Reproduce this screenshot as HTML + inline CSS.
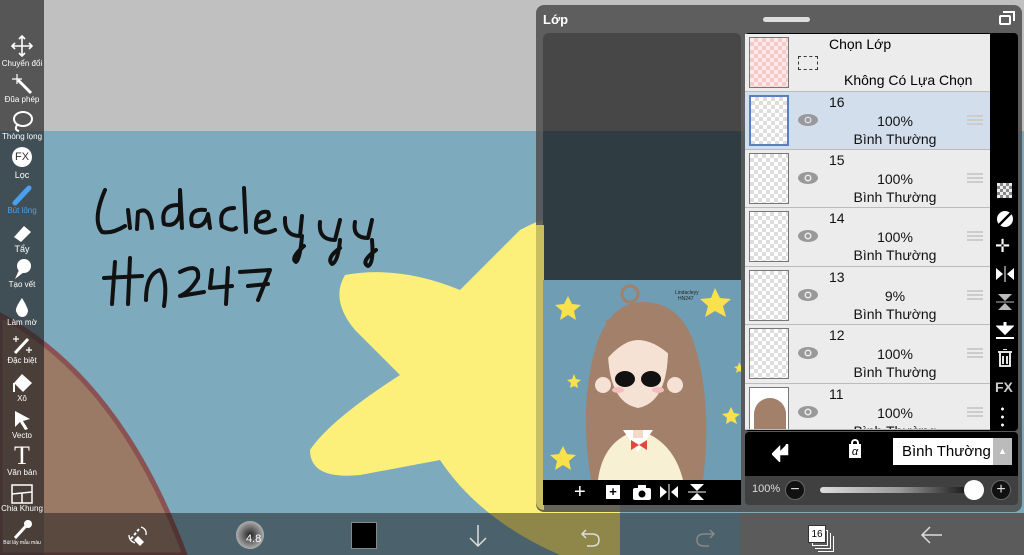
<!DOCTYPE html>
<html><head><meta charset="utf-8"><style>
*{margin:0;padding:0;box-sizing:border-box}
body{width:1024px;height:555px;overflow:hidden;position:relative;background:#7eaabe;font-family:"Liberation Sans","Noto Sans CJK JP",sans-serif}
.abs{position:absolute}
.tb{position:absolute;left:0;width:44px;text-align:center;color:#fff;font-size:8px}
.tb svg{display:block;margin:0 auto}
.row{position:absolute;left:745px;width:245px;background:#ececec;border-bottom:1px solid #bbb}
.th{position:absolute;left:4px;top:3px;width:40px;height:51px;border:1px solid #777;background-color:#fff;background-image:linear-gradient(45deg,#ddd 25%,transparent 25%,transparent 75%,#ddd 75%),linear-gradient(45deg,#ddd 25%,transparent 25%,transparent 75%,#ddd 75%);background-size:8px 8px;background-position:0 0,4px 4px}
.num{position:absolute;left:84px;top:2px;font-size:14px;color:#111}
.pct{position:absolute;left:60px;width:180px;text-align:center;top:21px;font-size:14px;color:#111}
.mode{position:absolute;left:60px;width:180px;text-align:center;top:39px;font-size:14px;color:#111}
.eye{position:absolute;left:52px;top:20px}
.hb{position:absolute;left:222px;top:23px;width:16px;height:10px;border-top:2px solid #ccc;border-bottom:2px solid #ccc}
.hb:after{content:"";position:absolute;left:0;right:0;top:2px;border-top:2px solid #ccc}
</style></head><body>
<!-- canvas -->
<div class="abs" style="left:0;top:0;width:1024px;height:131px;background:#c0c0c0"></div>
<svg class="abs" style="left:0;top:0" width="1024" height="555">
<path d="M0 315 Q120 380 185 555 L0 555Z" fill="#9a7a64" stroke="#8a5252" stroke-width="5"/>
<path d="M345 275 Q330 300 355 330 L400 375 Q330 420 310 450 Q310 480 360 475 L440 460 Q480 520 560 555 L620 555 L620 225 Q575 200 520 230 L460 290 Q400 265 345 275Z" fill="#fdf07a"/>
<g fill="none" stroke="#111" stroke-width="4" stroke-linecap="round" stroke-linejoin="round">
<path d="M105 190 Q92 220 102 232 Q112 234 125 226"/>
<path d="M128 210 L130 228 M137 229 L138 212 Q150 205 152 228"/>
<path d="M178 205 Q160 205 164 224 Q176 228 180 214 L180 190 L182 228"/>
<path d="M205 210 Q188 208 192 225 Q204 230 208 214 L210 228"/>
<path d="M234 208 Q218 208 222 226 Q232 232 236 228"/>
<path d="M244 188 L246 232"/>
<path d="M258 222 Q272 220 268 212 Q255 210 256 228 Q262 236 275 230"/>
<path d="M285 218 Q284 236 300 236 L302 216 M302 236 Q300 260 296 262 Q290 258 304 246"/>
<path d="M320 222 Q318 240 335 240 L340 220 M340 240 Q338 262 332 264 Q326 258 340 248"/>
<path d="M355 222 Q352 238 368 238 L372 220 M372 240 Q374 264 368 266 Q360 262 376 250"/>
<path d="M115 262 L112 304 M130 258 L128 304 M104 278 L142 276"/>
<path d="M146 300 Q146 274 160 270 Q168 280 164 306"/>
<path d="M180 272 Q200 262 198 278 Q190 292 180 296 L204 292"/>
<path d="M212 270 L210 288 L232 286 M228 268 L226 304"/>
<path d="M240 272 L270 270 L258 300 M248 286 L268 284"/>
</g>
</svg>
<!-- left toolbar -->
<div class="abs" style="left:0;top:0;width:44px;height:555px;background:rgba(35,35,35,0.68)"></div>
<div class="tb" style="top:35px"><svg width="22" height="22" viewBox="0 0 22 22" fill="none" stroke="#fff" stroke-width="1.6"><path d="M11 1V21M1 11H21M8 4l3-3 3 3M8 18l3 3 3-3M4 8l-3 3 3 3M18 8l3 3-3 3"/></svg><div style="margin-top:2px">Chuyển đổi</div></div>
<div class="tb" style="top:73px"><svg width="22" height="22"><path d="M7 7L20 20" stroke="#fff" stroke-width="3"/><path d="M6 1v10M1 6h10" stroke="#fff" stroke-width="1.2"/></svg><div>Đũa phép</div></div>
<div class="tb" style="top:110px"><svg width="22" height="22"><ellipse cx="12" cy="9" rx="9" ry="7" fill="none" stroke="#fff" stroke-width="2"/><path d="M6 15 Q3 20 8 21" stroke="#fff" stroke-width="2" fill="none"/></svg><div>Thòng lọng</div></div>
<div class="tb" style="top:147px"><div style="width:20px;height:20px;border-radius:50%;background:#fff;color:#333;font-size:11px;line-height:20px;margin:0 auto">FX</div><div style="font-size:9px;margin-top:3px">Lọc</div></div>
<div class="tb" style="top:184px;color:#4aa0ee"><svg width="22" height="22"><path d="M4 19L18 4" stroke="#4aa0ee" stroke-width="5" stroke-linecap="round"/></svg><div>Bút lông</div></div>
<div class="tb" style="top:222px"><svg width="22" height="22"><path d="M3 15L13 4L20 10L10 20Z" fill="#fff"/></svg><div style="font-size:9px">Tẩy</div></div>
<div class="tb" style="top:258px"><svg width="22" height="22"><circle cx="13" cy="8" r="7" fill="#fff"/><path d="M8 12L4 21L13 14Z" fill="#fff"/></svg><div>Tạo vết</div></div>
<div class="tb" style="top:296px"><svg width="22" height="22"><path d="M11 2Q4 12 5 15Q7 21 11 21Q16 21 17 15Q17 12 11 2Z" fill="#fff"/></svg><div>Làm mờ</div></div>
<div class="tb" style="top:334px"><svg width="22" height="22"><path d="M4 19L17 5" stroke="#fff" stroke-width="3"/><path d="M5 2v6M2 5h6M18 13v6M15 16h6" stroke="#fff" stroke-width="1.2"/></svg><div>Đặc biệt</div></div>
<div class="tb" style="top:372px"><svg width="22" height="22"><path d="M11 2L21 11L12 20L3 11Z" fill="#fff"/><path d="M3 11V20" stroke="#fff" stroke-width="2"/></svg><div>Xô</div></div>
<div class="tb" style="top:409px"><svg width="22" height="22"><path d="M4 2L19 10L12 12L17 20L14 21L9 13L4 18Z" fill="#fff"/></svg><div>Vecto</div></div>
<div class="tb" style="top:444px"><div style="font-family:'Liberation Serif',serif;font-size:26px;line-height:24px">T</div><div>Văn bản</div></div>
<div class="tb" style="top:484px"><svg width="22" height="20"><rect x="1" y="1" width="20" height="18" fill="none" stroke="#fff" stroke-width="1.5"/><path d="M1 10L21 8M11 9V19" stroke="#fff" stroke-width="1.5"/></svg><div>Chia Khung</div></div>
<div class="tb" style="top:518px"><svg width="22" height="22"><path d="M4 20L15 8" stroke="#fff" stroke-width="3"/><circle cx="17" cy="6" r="4" fill="#fff"/></svg><div style="font-size:5px">Bút lấy mẫu màu</div></div>
<!-- bottom bar -->
<div class="abs" style="left:44px;top:513px;width:696px;height:42px;background:rgba(20,20,20,0.48)"></div>
<div class="abs" style="left:740px;top:513px;width:284px;height:42px;background:#5b5b5b"></div>
<svg class="abs" style="left:125px;top:523px" width="26" height="24"><path d="M6 16L14 6" stroke="#fff" stroke-width="2" stroke-dasharray="3 2"/><path d="M13 13l6 6-4 4-6-6z" fill="#fff"/><path d="M16 4q6 2 5 8M4 12q0 6 6 8" stroke="#fff" stroke-width="1.3" fill="none"/></svg>
<div class="abs" style="left:236px;top:521px;width:28px;height:28px;border-radius:50%;background:radial-gradient(#222,#999 60%,#eee)"></div>
<div class="abs" style="left:246px;top:533px;color:#fff;font-size:11px">4.8</div>
<div class="abs" style="left:351px;top:522px;width:26px;height:27px;background:#000;border:1px solid #888"></div>
<svg class="abs" style="left:468px;top:524px" width="20" height="24"><path d="M10 1V22M2 14l8 8 8-8" stroke="#ddd" stroke-width="1.5" fill="none"/></svg>
<svg class="abs" style="left:580px;top:527px" width="22" height="20"><path d="M6 3L2 7l4 4M2 7h10q7 0 7 6t-7 6H7" stroke="#ddd" stroke-width="1.5" fill="none"/></svg>
<svg class="abs" style="left:694px;top:527px" width="22" height="20"><path d="M16 3l4 4-4 4M20 7H10q-7 0-7 6t7 6h5" stroke="#888" stroke-width="1.5" fill="none"/></svg>
<div class="abs" style="left:812px;top:530px;width:16px;height:16px;border:1px solid #fff;box-shadow:2px 2px 0 #5b5b5b,3px 3px 0 #fff,5px 5px 0 #5b5b5b,6px 6px 0 #fff"></div>
<div class="abs" style="left:808px;top:525px;width:18px;height:18px;background:#fff;color:#000;font-size:10px;text-align:center;line-height:18px;border:1px solid #333">16</div>
<svg class="abs" style="left:920px;top:525px" width="24" height="20"><path d="M22 10H2M10 2L2 10l8 8" stroke="#ddd" stroke-width="1.5" fill="none"/></svg>
<!-- layer panel -->
<div class="abs" style="left:536px;top:5px;width:486px;height:507px;background:rgba(80,80,80,0.88);border-radius:8px"></div>
<div class="abs" style="left:543px;top:12px;color:#fff;font-size:13px;font-weight:bold">Lớp</div>
<div class="abs" style="left:763px;top:17px;width:47px;height:5px;border-radius:3px;background:#ddd"></div>
<div class="abs" style="left:999px;top:15px;width:12px;height:10px;border:2px solid #fff;border-radius:2px"></div>
<div class="abs" style="left:1003px;top:11px;width:12px;height:10px;border-top:2px solid #fff;border-right:2px solid #fff"></div>
<!-- preview -->
<div class="abs" style="left:543px;top:33px;width:198px;height:98px;background:#474747;border-radius:6px 6px 0 0"></div>
<div class="abs" style="left:543px;top:131px;width:198px;height:149px;background:#2f3c42"></div>
<div class="abs" style="left:536px;top:225px;width:8px;height:285px;background:#c9bf5e;border-radius:0 0 0 8px"></div>
<svg class="abs" style="left:543px;top:280px" width="198" height="200">
<rect width="198" height="200" fill="#6f9db3"/>
<g fill="#f8e14a"><path d="M25 16l4 8 9 1-7 6 2 9-8-5-8 5 2-9-7-6 9-1z"/><path d="M172 8l5 10 11 1-8 7 3 11-11-6-10 6 3-11-8-7 11-1z"/><path d="M20 166l4 8 9 1-7 6 2 9-8-5-8 5 2-9-7-6 9-1z"/><path d="M188 127l3 6 6 1-5 4 2 6-6-3-5 3 1-6-5-4 6-1z"/><path d="M31 94l2 5 5 1-4 3 1 5-4-2-4 2 1-5-4-3 5-1z"/><path d="M196 82l2 4 4 1-3 2 1 4-4-2-3 2 1-4-3-2 4-1z"/></g>
<path d="M48 200 Q35 120 55 60 Q70 22 100 22 Q135 22 150 60 Q170 120 160 200Z" fill="#a2806a"/>
<circle cx="87" cy="14" r="8" fill="none" stroke="#a2806a" stroke-width="3"/>
<path d="M55 200 Q60 160 95 150 Q130 160 140 200Z" fill="#f8f0d2"/>
<path d="M80 150 L95 172 L110 150Z" fill="#fff"/>
<path d="M90 150 h10 v8 h-10z" fill="#f4d9c6"/>
<path d="M65 60 Q63 122 95 128 Q127 122 125 60Z" fill="#f6e2d4"/>
<circle cx="60" cy="105" r="8" fill="#f6e2d4"/><circle cx="132" cy="105" r="8" fill="#f6e2d4"/>
<path d="M63 40 Q95 30 127 42 L127 75 Q110 60 95 60 Q80 60 63 80Z" fill="#a2806a"/>
<ellipse cx="82" cy="99" rx="10" ry="8" fill="#111"/><ellipse cx="108" cy="99" rx="10" ry="8" fill="#111"/>
<ellipse cx="75" cy="110" rx="6" ry="3" fill="#f4bdbd"/><ellipse cx="115" cy="110" rx="6" ry="3" fill="#f4bdbd"/>
<path d="M96 165l-8-5v10zM96 165l8-5v10z" fill="#e3463c"/>
<text x="132" y="14" font-size="5" fill="#222">Lindacleyy</text><text x="135" y="20" font-size="5" fill="#222">HN247</text>
</svg>
<div class="abs" style="left:543px;top:480px;width:198px;height:25px;background:#000"></div>
<div class="abs" style="left:574px;top:480px;color:#fff;font-size:20px;line-height:24px">+</div>
<div class="abs" style="left:606px;top:485px;width:14px;height:14px;background:#fff;color:#000;font-size:13px;line-height:13px;text-align:center;font-weight:bold">+</div>
<svg class="abs" style="left:633px;top:485px" width="18" height="15"><rect y="3" width="18" height="12" rx="2" fill="#fff"/><rect x="5" y="0" width="8" height="4" fill="#fff"/><circle cx="9" cy="9" r="3.5" fill="#000"/></svg>
<svg class="abs" style="left:660px;top:484px" width="18" height="16"><path d="M0 2l7 6-7 6zM18 2l-7 6 7 6z" fill="#fff"/><path d="M9 0v16" stroke="#fff"/></svg>
<svg class="abs" style="left:688px;top:484px" width="18" height="16"><path d="M2 0l7 7 7-7zM2 16l7-7 7 7z" fill="#fff"/><path d="M0 8h18" stroke="#fff"/></svg>
<!-- layer list -->
<div class="abs" style="left:745px;top:33px;width:273px;height:398px;background:#000;border-radius:4px"></div>
<div class="row" style="top:34px;height:58px">
<div class="th" style="background-color:#fbe8e8;background-image:linear-gradient(45deg,#f3c9c9 25%,transparent 25%,transparent 75%,#f3c9c9 75%),linear-gradient(45deg,#f3c9c9 25%,transparent 25%,transparent 75%,#f3c9c9 75%)"></div>
<div class="abs" style="left:84px;top:2px;font-size:14px">Chọn Lớp</div>
<div class="abs" style="left:53px;top:22px;width:20px;height:14px;border:1px dashed #333"></div>
<div class="abs" style="left:99px;top:38px;font-size:14px">Không Có Lựa Chọn</div>
</div>
<div class="row" style="top:92px;height:58px;background:#d3deec"><div class="th" style="border:2px solid #5a7fbf"></div><div class="num">16</div><svg class="eye" width="22" height="16"><ellipse cx="11" cy="8" rx="10" ry="6" fill="#999"/><circle cx="11" cy="8" r="3.5" fill="#d3deec"/><circle cx="11" cy="8" r="2" fill="#999"/></svg><div class="pct">100%</div><div class="mode">Bình Thường</div><div class="hb"></div></div>
<div class="row" style="top:150px;height:58px"><div class="th"></div><div class="num">15</div><svg class="eye" width="22" height="16"><ellipse cx="11" cy="8" rx="10" ry="6" fill="#999"/><circle cx="11" cy="8" r="3.5" fill="#ececec"/><circle cx="11" cy="8" r="2" fill="#999"/></svg><div class="pct">100%</div><div class="mode">Bình Thường</div><div class="hb"></div></div>
<div class="row" style="top:208px;height:59px"><div class="th"></div><div class="num">14</div><svg class="eye" width="22" height="16"><ellipse cx="11" cy="8" rx="10" ry="6" fill="#999"/><circle cx="11" cy="8" r="3.5" fill="#ececec"/><circle cx="11" cy="8" r="2" fill="#999"/></svg><div class="pct">100%</div><div class="mode">Bình Thường</div><div class="hb"></div></div>
<div class="row" style="top:267px;height:58px"><div class="th"></div><div class="num">13</div><svg class="eye" width="22" height="16"><ellipse cx="11" cy="8" rx="10" ry="6" fill="#999"/><circle cx="11" cy="8" r="3.5" fill="#ececec"/><circle cx="11" cy="8" r="2" fill="#999"/></svg><div class="pct">9%</div><div class="mode">Bình Thường</div><div class="hb"></div></div>
<div class="row" style="top:325px;height:59px"><div class="th"></div><div class="num">12</div><svg class="eye" width="22" height="16"><ellipse cx="11" cy="8" rx="10" ry="6" fill="#999"/><circle cx="11" cy="8" r="3.5" fill="#ececec"/><circle cx="11" cy="8" r="2" fill="#999"/></svg><div class="pct">100%</div><div class="mode">Bình Thường</div><div class="hb"></div></div>
<div class="row" style="top:384px;height:46px;overflow:hidden"><div class="th" style="background:#fff"><div style="position:absolute;left:4px;top:10px;width:32px;height:42px;border-radius:16px 16px 0 0;background:#a2806a"></div></div><div class="num">11</div><svg class="eye" width="22" height="16"><ellipse cx="11" cy="8" rx="10" ry="6" fill="#999"/><circle cx="11" cy="8" r="3.5" fill="#ececec"/><circle cx="11" cy="8" r="2" fill="#999"/></svg><div class="pct">100%</div><div class="mode">Bình Thường</div><div class="hb"></div></div>
<!-- right icons -->
<div class="abs" style="left:997px;top:183px;width:15px;height:15px;background-color:#eee;background-image:linear-gradient(45deg,#888 25%,transparent 25%,transparent 75%,#888 75%),linear-gradient(45deg,#888 25%,transparent 25%,transparent 75%,#888 75%);background-size:6px 6px;background-position:0 0,3px 3px"></div>
<div class="abs" style="left:997px;top:211px;width:16px;height:16px;border-radius:50%;background:linear-gradient(135deg,#fff 45%,#000 45%,#000 55%,#fff 55%)"></div>
<div class="abs" style="left:995px;top:236px;color:#fff;font-size:18px">✛</div>
<svg class="abs" style="left:996px;top:266px" width="18" height="16"><path d="M0 2l7 6-7 6zM18 2l-7 6 7 6z" fill="#fff"/><path d="M9 0v16" stroke="#fff"/></svg>
<svg class="abs" style="left:996px;top:294px" width="18" height="16"><path d="M2 0l7 7 7-7zM2 16l7-7 7 7z" fill="#bbb"/><path d="M0 8h18" stroke="#bbb"/></svg>
<svg class="abs" style="left:996px;top:322px" width="18" height="18"><path d="M9 0v8M3 5l6 6 6-6z" stroke="#fff" stroke-width="3" fill="#fff"/><path d="M0 16h18" stroke="#fff" stroke-width="2"/></svg>
<svg class="abs" style="left:998px;top:349px" width="14" height="18"><path d="M0 3h14M5 0h4M2 4v13h10V4M5 7v8M9 7v8" stroke="#fff" stroke-width="1.8" fill="none"/></svg>
<div class="abs" style="left:995px;top:379px;color:#ccc;font-size:14px;font-weight:bold">FX</div>
<div class="abs" style="left:1001px;top:405px;width:3px;height:22px;background:radial-gradient(circle,#fff 1.3px,transparent 1.6px);background-size:3px 8px"></div>
<!-- bottom controls -->
<div class="abs" style="left:745px;top:432px;width:273px;height:44px;background:#000;border-radius:4px 4px 0 0"></div>
<svg class="abs" style="left:772px;top:442px" width="20" height="20"><path d="M15 2v10H5M1 12l6-6v12z" stroke="#fff" stroke-width="2.5" fill="#fff"/></svg>
<div class="abs" style="left:849px;top:444px;width:12px;height:14px;background:#fff;color:#000;font-size:11px;text-align:center;line-height:16px;font-style:italic">α</div>
<div class="abs" style="left:851px;top:439px;width:8px;height:7px;border:2px solid #fff;border-bottom:none;border-radius:4px 4px 0 0"></div>
<div class="abs" style="left:893px;top:438px;width:100px;height:27px;background:#fff;font-size:15px;line-height:27px;padding-left:9px">Bình Thường</div>
<div class="abs" style="left:993px;top:438px;width:19px;height:27px;background:#bbb;color:#fff;font-size:9px;text-align:center;line-height:27px">▲</div>
<div class="abs" style="left:745px;top:476px;width:273px;height:29px;background:#404040;border-radius:0 0 4px 4px"></div>
<div class="abs" style="left:752px;top:483px;color:#ddd;font-size:11px">100%</div>
<div class="abs" style="left:785px;top:480px;width:20px;height:20px;border-radius:50%;background:#111;border:1px solid #666;color:#ddd;text-align:center;line-height:17px;font-size:16px">−</div>
<div class="abs" style="left:820px;top:487px;width:160px;height:6px;border-radius:3px;background:linear-gradient(90deg,#ddd,#999 50%,#000)"></div>
<div class="abs" style="left:964px;top:480px;width:20px;height:20px;border-radius:50%;background:#fff"></div>
<div class="abs" style="left:991px;top:480px;width:20px;height:20px;border-radius:50%;background:#111;border:1px solid #666;color:#ddd;text-align:center;line-height:18px;font-size:16px">+</div>
</body></html>
